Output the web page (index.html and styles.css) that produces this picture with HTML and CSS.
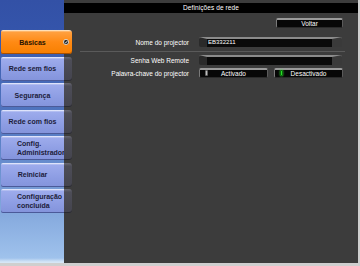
FILE: index.html
```html
<!DOCTYPE html>
<html lang="pt">
<head>
  <meta charset="UTF-8" />
  <title>Definições de rede</title>
  <link rel="stylesheet" href="styles.css">
</head>
<body>
  <div class="screen">
    <nav class="sidebar">
      <div class="nav-item active">
        <div class="nav-label">Básicas</div>
        <div class="nav-tab">
          <svg class="check" width="6" height="6" viewBox="0 0 6 6">
            <circle cx="3" cy="3" r="2.6" fill="#222" stroke="#eee" stroke-width="0.8"/>
            <path d="M1.7 3.1 L2.7 4 L4.3 2" fill="none" stroke="#fff" stroke-width="0.8"/>
          </svg>
        </div>
      </div>
      <div class="nav-item"><div class="nav-label">Rede sem fios</div><div class="nav-tab"></div></div>
      <div class="nav-item"><div class="nav-label">Segurança</div><div class="nav-tab"></div></div>
      <div class="nav-item"><div class="nav-label">Rede com fios</div><div class="nav-tab"></div></div>
      <div class="nav-item"><div class="nav-label left">Config.<br>Administrador</div><div class="nav-tab"></div></div>
      <div class="nav-item"><div class="nav-label">Reiniciar</div><div class="nav-tab"></div></div>
      <div class="nav-item"><div class="nav-label left">Configuração<br>concluída</div><div class="nav-tab"></div></div>
    </nav>

    <main class="main">
      <div class="titlebar">Definições de rede</div>

      <div class="actions">
        <div class="btn">Voltar</div>
      </div>

      <div class="row">
        <div class="label">Nome do projector</div>
        <div class="field">EB332211</div>
      </div>

      <div class="separator"></div>

      <div class="row">
        <div class="label">Senha Web Remote</div>
        <div class="field"></div>
      </div>

      <div class="row">
        <div class="label">Palavra-chave do projector</div>
        <div class="toggle-group">
          <div class="btn toggle"><span class="led"></span>Activado</div>
          <div class="btn toggle"><span class="led on"></span>Desactivado</div>
        </div>
      </div>
    </main>
  </div>
</body>
</html>
```

FILE: styles.css
```css
:root {
  --panel: #3c3c3c;
  --nav-blue: #8d9de3;
  --orange: #ff8a14;
  --text-nav: #1c1c3a;
  --white: #ffffff;
}

* {
  margin: 0;
  padding: 0;
  box-sizing: border-box;
}

body {
  background: #cfcfcf;
  font-family: "Liberation Sans", Arial, sans-serif;
  font-size: 7px;
  font-weight: bold;
}

.screen {
  display: flex;
  width: 358px;
  height: 263px;
  background: var(--panel);
}

/* left menu */
.sidebar {
  width: 64px;
  flex-shrink: 0;
  padding-top: 30px;
  background: linear-gradient(#3351a6 0, #3454aa 28px, #5a80c6 140px, #9fc2ec 258px, #d6e6f6 262px);
  display: flex;
  flex-direction: column;
  gap: 2.5px;
  position: relative;
  z-index: 1;
}

.nav-item {
  display: flex;
  width: 71px;
  height: 24px;
  margin-left: 1px;
}

.nav-label {
  width: 63px;
  display: flex;
  align-items: center;
  justify-content: center;
  text-align: center;
  color: var(--text-nav);
  line-height: 9px;
  background: linear-gradient(#f4f6ff 0, #9dabec 2px, var(--nav-blue) 60%, #8393db 100%);
  border-radius: 2px 0 0 2px;
  box-shadow: inset 0 -1px 0 #4b5a99;
}

.nav-label.left {
  justify-content: flex-start;
  text-align: left;
  padding-left: 16px;
}

.nav-tab {
  width: 8px;
  background: linear-gradient(#6a6a74 0, #4d4d57 3px, #44444e 100%);
  border-radius: 0 3px 3px 0;
  box-shadow: inset 0 -1px 0 #2a2a30;
}

.nav-item.active .nav-label,
.nav-item.active .nav-tab {
  background: linear-gradient(#fff4e0 0, #ffa040 2px, var(--orange) 50%, #f77f00 100%);
  box-shadow: inset 0 -1px 0 #a85000;
}

.nav-item.active .nav-label {
  color: #2a1400;
}

.nav-item.active .nav-tab {
  display: flex;
  align-items: center;
  padding-left: 0;
  margin-left: -1px;
  width: 9px;
}

/* right panel */
.main {
  flex: 1;
  padding-top: 3px;
  color: var(--white);
}

.titlebar {
  height: 10px;
  background: #000;
  text-align: center;
  line-height: 10px;
  font-weight: normal;
  font-size: 6.5px;
  letter-spacing: 0.1px;
}

.actions {
  display: flex;
  justify-content: flex-end;
  padding: 5px 15px 0 0;
}

.btn {
  width: 67px;
  height: 10px;
  background: #070707;
  border-top: 2px solid #9a9a9a;
  border-left: 1px solid #7a7a7a;
  border-right: 1px solid #5a5a5a;
  border-bottom: 1px solid #2a2a2a;
  border-radius: 2px;
  display: flex;
  align-items: center;
  justify-content: center;
  line-height: 7px;
  font-weight: normal;
  font-size: 6.5px;
}

.row {
  display: flex;
  align-items: center;
  gap: 10px;
  height: 10px;
  margin-top: 3px;
}

.actions + .row {
  margin-top: 9px;
}

.label {
  width: 125px;
  text-align: right;
  font-weight: normal;
  font-size: 6.5px;
}

.field {
  width: 143px;
  height: 10px;
  background: #0a0a0a;
  border-top: 2px solid #8c8c8c;
  border-left: 8px solid #2a2a2a;
  border-right: 10px solid #3a3a3a;
  border-radius: 2px;
  font-size: 6px;
  font-weight: normal;
  line-height: 7px;
  padding-left: 1px;
}

.separator {
  height: 1px;
  margin: 4px 13px 0 16px;
  background: #5a5a5a;
}

.separator + .row {
  margin-top: 3px;
}

.toggle-group {
  display: flex;
  gap: 6px;
}

.toggle {
  width: 69px;
  position: relative;
}

.led {
  position: absolute;
  left: 5px;
  top: 0;
  width: 3px;
  height: 6px;
  border-radius: 1px;
  background: #bdbdbd;
  border: 1px solid #666;
}

.led.on {
  background: #27e027;
  border-color: #0c6a0c;
  box-shadow: 0 0 2px #3cff3c;
}
```
